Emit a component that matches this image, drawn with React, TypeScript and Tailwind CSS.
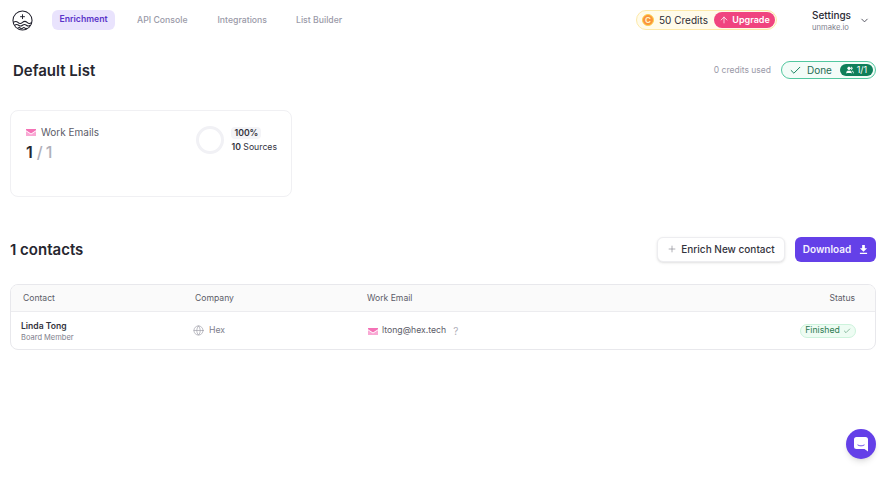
import React from "react";
import { Check, ChevronDown, Plus, Users, Globe, ArrowUp } from "lucide-react";

function Mail({ className }: { className?: string }) {
  return (
    <svg viewBox="0 0 20 14" className={className}>
      <path d="M0 0h20v2.500L10 9 0 2.500z" fill="#f472b6" />
      <path d="M0 4.500L10 11l10-6.500V14H0z" fill="#f9a8d4" />
    </svg>
  );
}

function Logo() {
  return (
    <svg viewBox="0 0 22 22" className="w-[21px] h-[21px]" fill="none" stroke="#1f1f2b" strokeWidth="1.100">
      <circle cx="11" cy="11" r="10" />
      <path d="M11 4.500v5M8.500 7h5" strokeWidth="1" />
      <path d="M1.500 13c2-1.600 3-1.600 4.700 0s3 1.600 4.800 0 3-1.600 4.800 0 3 1.600 4.700 0" />
      <path d="M2.800 16c1.600-1.300 2.500-1.300 4.100 0s2.500 1.300 4.100 0 2.500-1.300 4.100 0 2.500 1.300 4.100 0" />
      <path d="M6 19c1.300-.8 2-.8 2.800 0s1.600.8 2.400 0 1.600-.8 2.400 0 1.600.8 2.400 0" />
    </svg>
  );
}

export default function App() {
  return (
    <div className="w-[885px] h-[502px] bg-white relative overflow-hidden font-['Inter',sans-serif] text-[#1f1f2b]">
      <header className="h-10 flex items-center pl-3 pr-[15px]">
        <Logo />
        <nav className="flex items-center ml-[19px] text-[8.700px] font-medium text-[#9a9aa8]">
          <div className="h-5 w-[63px] flex items-center justify-center rounded-md bg-[#e9e3fd] text-[#5b34c9] font-semibold">Enrichment</div>
          <div className="ml-[22px] mt-[1px]">API Console</div>
          <div className="ml-[30px] mt-[1px]">Integrations</div>
          <div className="ml-[29px] mt-[1px]">List Builder</div>
        </nav>
        <div className="ml-auto flex items-center">
          <div className="h-5 w-[141px] rounded-full bg-[#fffbea] border border-[#fde9a8] flex items-center pl-[5px] pr-[1px]">
            <span className="w-3 h-3 rounded-full bg-[#fb923c] border border-[#fcd34d] flex items-center justify-center text-[8px] font-bold text-[#fef3c7]">C</span>
            <span className="ml-[5px] text-[10px] text-[#2a2a35]">50 Credits</span>
            <span className="ml-auto h-4 w-[61px] rounded-full bg-[#f0447f] text-white text-[9px] font-semibold flex items-center justify-center gap-[3px]">
              <ArrowUp className="w-[10px] h-[10px]" strokeWidth={1.800} />Upgrade
            </span>
          </div>
          <div className="ml-[35px] flex flex-col">
            <span className="text-[10px] font-medium text-[#2a2a35] leading-[14px] mt-[1px]">Settings</span>
            <span className="text-[7.600px] text-[#80808c] leading-[12px]">unmake.io</span>
          </div>
          <ChevronDown className="w-[11px] h-[11px] text-[#4a4a56] ml-[8px]" strokeWidth={2} />
        </div>
      </header>

      <div className="flex items-center justify-between pl-[13px] pr-[9px] mt-[18px] h-6">
        <h1 className="text-[15px] font-semibold text-[#26262f] mt-[2px]">Default List</h1>
        <div className="flex items-center">
          <span className="text-[8.500px] text-[#9a9aa8] mr-[10px]">0 credits used</span>
          <div className="h-[18px] w-[95px] rounded-full border border-[#52c79f] bg-[#f3fcf8] flex items-center pl-[7px] pr-[2px]">
            <Check className="w-[13px] h-[13px] text-[#0f7f5a]" strokeWidth={1.800} />
            <span className="ml-[5px] text-[10px] text-[#1f6d53]">Done</span>
            <span className="ml-auto h-3 w-[33px] rounded-full bg-[#0f7f5a] text-white text-[9px] flex items-center justify-center gap-[3px]">
              <Users className="w-2 h-2" fill="white" />1/1
            </span>
          </div>
        </div>
      </div>

      <section className="ml-[10px] mt-[28px] w-[282px] h-[87px] rounded-lg border border-[#f0f0f3] flex justify-between pl-[15px] pr-[14px] pt-[15px]">
        <div>
          <div className="flex items-center mt-[-1px]">
            <Mail className="w-[10px] h-[7px]" />
            <span className="ml-[5px] text-[10px] text-[#5c5c68]">Work Emails</span>
          </div>
          <div className="text-[16px] font-semibold leading-5 mt-[2px]">
            <span className="text-[#26262f]">1</span>
            <span className="text-[#b0b0ba] font-medium ml-[4px]">/</span>
            <span className="text-[#b0b0ba] font-medium ml-[3px]">1</span>
          </div>
        </div>
        <div className="flex items-start">
          <div className="w-7 h-7 rounded-full border-[3px] border-[#f1f1f5] mr-[7px]" />
          <div className="flex flex-col items-start mt-[1px]">
            <span className="text-[8.700px] font-semibold bg-[#f4f4f7] rounded px-[3px] leading-[12px] text-[#33333d]">100%</span>
            <span className="text-[8.700px] text-[#33333d] mt-[2px] leading-[12px]"><span className="font-semibold">10</span> Sources</span>
          </div>
        </div>
      </section>

      <div className="flex items-center justify-between pl-[10px] pr-[9px] mt-[40px] h-6">
        <h2 className="text-[15px] font-semibold text-[#26262f] mt-[2px]">1 contacts</h2>
        <div className="flex items-center gap-[10px]">
          <button className="h-[25px] w-[128px] rounded-md border border-[#ededf0] bg-white shadow-sm flex items-center justify-center text-[10px] font-medium text-[#33333d]">
            <Plus className="w-[10px] h-[10px] text-[#80808c] mr-[4px]" strokeWidth={1.500} />Enrich New contact
          </button>
          <button className="h-[25px] w-[81px] rounded-md bg-[#6440e8] flex items-center justify-center text-[10px] font-semibold text-[#f4f1ff]">
            Download
            <svg viewBox="0 0 10 10" className="w-[9px] h-[9px] ml-[8px]" fill="white"><path d="M3.500 0h3v3.500h2.500L5 7.500 1 3.500h2.500zM1 8.700h8V10H1z" /></svg>
          </button>
        </div>
      </div>

      <section className="ml-[10px] mr-[9px] mt-[23px] h-[66px] rounded-lg border border-[#e8e8ec] overflow-hidden">
        <div className="h-[27px] bg-[#fafafa] border-b border-[#ececef] flex items-center text-[8.600px] text-[#5c5c68] pr-[20px]">
          <span className="ml-[12px] w-[172px]">Contact</span>
          <span className="w-[172px]">Company</span>
          <span>Work Email</span>
          <span className="ml-auto">Status</span>
        </div>
        <div className="h-[37px] flex items-center pr-[19px] pt-[1px]">
          <div className="ml-[10px] w-[172px] flex flex-col">
            <span className="text-[8.600px] font-semibold text-[#33333d] leading-[12px]">Linda Tong</span>
            <span className="text-[7.500px] text-[#80808c] leading-[10px] mt-[1px]">Board Member</span>
          </div>
          <div className="flex items-center w-[175px] text-[8.700px] text-[#80808c]">
            <Globe className="w-[11px] h-[11px] text-[#a0a0aa]" strokeWidth={1.500} />
            <span className="ml-[5px]">Hex</span>
          </div>
          <div className="flex items-center text-[8.700px] text-[#5c5c68]">
            <Mail className="w-[10px] h-[7px]" />
            <span className="ml-[4px]">ltong@hex.tech</span>
            <span className="ml-[7px] text-[#b0b0ba] text-[10px]">?</span>
          </div>
          <div className="ml-auto h-[14px] w-[56px] rounded-full bg-[#eefcf3] border border-[#cdf3dc] flex items-center justify-center text-[8.700px] text-[#2c7a50]">
            Finished
            <Check className="w-2 h-2 ml-[3px]" strokeWidth={1.500} />
          </div>
        </div>
      </section>

      <button className="absolute left-[846px] top-[429px] w-[30px] h-[30px] rounded-full bg-[#6440e8] flex items-center justify-center shadow-md">
        <svg viewBox="0 0 14 15" className="w-[14px] h-[15px]" fill="white">
          <path d="M2.500 0h9A2.500 2.500 0 0 1 14 2.500v12l-3.500-2.500h-8A2.500 2.500 0 0 1 0 9.500v-7A2.500 2.500 0 0 1 2.500 0z" />
          <path d="M3.500 7.800c2 1.400 5 1.400 7 0" stroke="#6440e8" strokeWidth="0.900" fill="none" />
        </svg>
      </button>
    </div>
  );
}
